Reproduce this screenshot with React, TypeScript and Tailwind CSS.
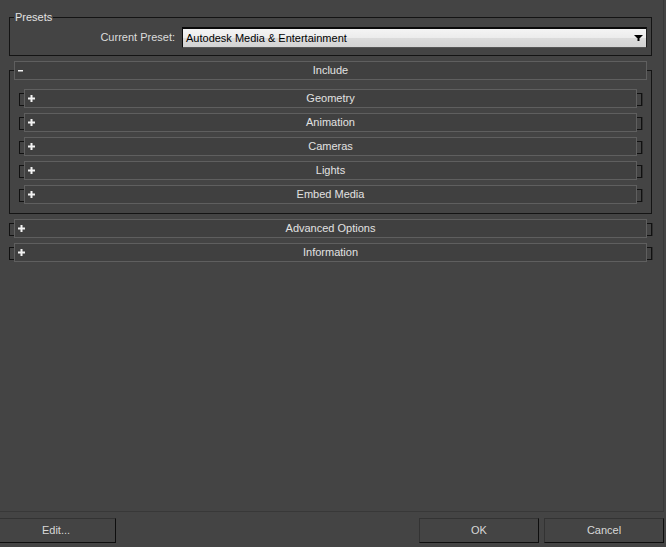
import React from "react";

const Plus = () => (
  <svg width="7" height="7" viewBox="0 0 7 7" className="ml-[3px] shrink-0">
    <rect x="2.5" y="0" width="2" height="7" fill="#f2f2f2" />
    <rect x="0" y="2.5" width="7" height="2" fill="#f2f2f2" />
  </svg>
);

const Minus = () => (
  <svg width="5" height="2" viewBox="0 0 5 2" className="ml-[3px] shrink-0">
    <rect x="0" y="0" width="5" height="1.5" fill="#f2f2f2" />
  </svg>
);

function Row({ label, open = false }: { label: string; open?: boolean }) {
  return (
    <div className="grid h-[19px] grid-cols-[5px_1fr_5px]">
      <div className="mt-[4px] h-[13px] border-y border-l border-[#111111]" />
      <div className="grid grid-cols-[40px_1fr_40px] items-center border border-[#5f5f5f] bg-[#404040]">
        {open ? <Minus /> : <Plus />}
        <span className="text-center leading-[13px] text-[#e2e2e2]">{label}</span>
        <span />
      </div>
      <div className="mt-[4px] h-[13px] border-y border-r border-[#111111] shadow-[1px_0_0_#303030]" />
    </div>
  );
}

export default function App() {
  return (
    <div className="h-[547px] w-[666px] overflow-hidden bg-[#444444] font-['Liberation_Sans',Arial,sans-serif] text-[11px] text-[#e0e0e0]">
      <div className="h-[512px] w-[664px] border-r border-b border-[#383838] pt-[10px]">
        <fieldset className="ml-[9px] w-[643px] border border-[#141414] px-0 pt-[3px] pb-[7px]">
          <legend className="ml-[4px] px-[1px] leading-[14px] text-[#e2e2e2]">Presets</legend>
          <div className="flex items-center justify-end gap-[7px] pr-[4px]">
            <span className="text-[#dcdcdc]">Current Preset:</span>
            <div className="flex h-[21px] w-[465px] items-center justify-between border-t-2 border-l border-r border-b border-t-[#0a0a0a] border-l-[#0a0a0a] border-r-[#1e1e1e] border-b-[#555555] bg-[linear-gradient(to_bottom,#f4f4f4_0%,#ececec_48%,#dbdbdb_52%,#d3d3d3_100%)] pl-[3px] pr-[3px] text-black">
              <span className="leading-[13px]">Autodesk Media &amp; Entertainment</span>
              <svg width="9" height="6" viewBox="0 0 9 6">
                <polygon points="0,0 9,0 4.5,4.5" fill="#000" />
                <rect x="3.5" y="4" width="2" height="2" fill="#000" />
              </svg>
            </div>
          </div>
        </fieldset>

        <div className="mt-[5px] ml-[9px] w-[643px]">
          <div className="relative z-10 ml-[5px] grid h-[19px] w-[633px] grid-cols-[40px_1fr_40px] items-center border border-[#5f5f5f] bg-[#404040]">
            <Minus />
            <span className="text-center leading-[13px] text-[#e2e2e2]">Include</span>
            <span />
          </div>
          <div className="-mt-[10px] flex flex-col gap-[5px] border border-[#141414] px-[9px] pt-[18px] pb-[9px]">
            <Row label="Geometry" />
            <Row label="Animation" />
            <Row label="Cameras" />
            <Row label="Lights" />
            <Row label="Embed Media" />
          </div>
        </div>

        <div className="mt-[5px] ml-[9px] flex w-[643px] flex-col gap-[5px]">
          <Row label="Advanced Options" />
          <Row label="Information" />
        </div>
      </div>

      <div className="mt-[6px] flex pr-[2px]">
        <button className="-ml-[4px] h-[25px] w-[120px] border-t border-l border-r border-b border-t-[#333333] border-l-[#333333] border-r-[#0e0e0e] border-b-[#0e0e0e] bg-[#444444] text-[#d8d8d8]">
          Edit...
        </button>
        <div className="ml-auto flex gap-[5px]">
          <button className="h-[25px] w-[120px] border-t border-l border-r border-b border-t-[#333333] border-l-[#333333] border-r-[#0e0e0e] border-b-[#0e0e0e] bg-[#444444] text-[#d8d8d8]">
            OK
          </button>
          <button className="h-[25px] w-[120px] border-t border-l border-r border-b border-t-[#333333] border-l-[#333333] border-r-[#0e0e0e] border-b-[#0e0e0e] bg-[#444444] text-[#d8d8d8]">
            Cancel
          </button>
        </div>
      </div>
    </div>
  );
}
